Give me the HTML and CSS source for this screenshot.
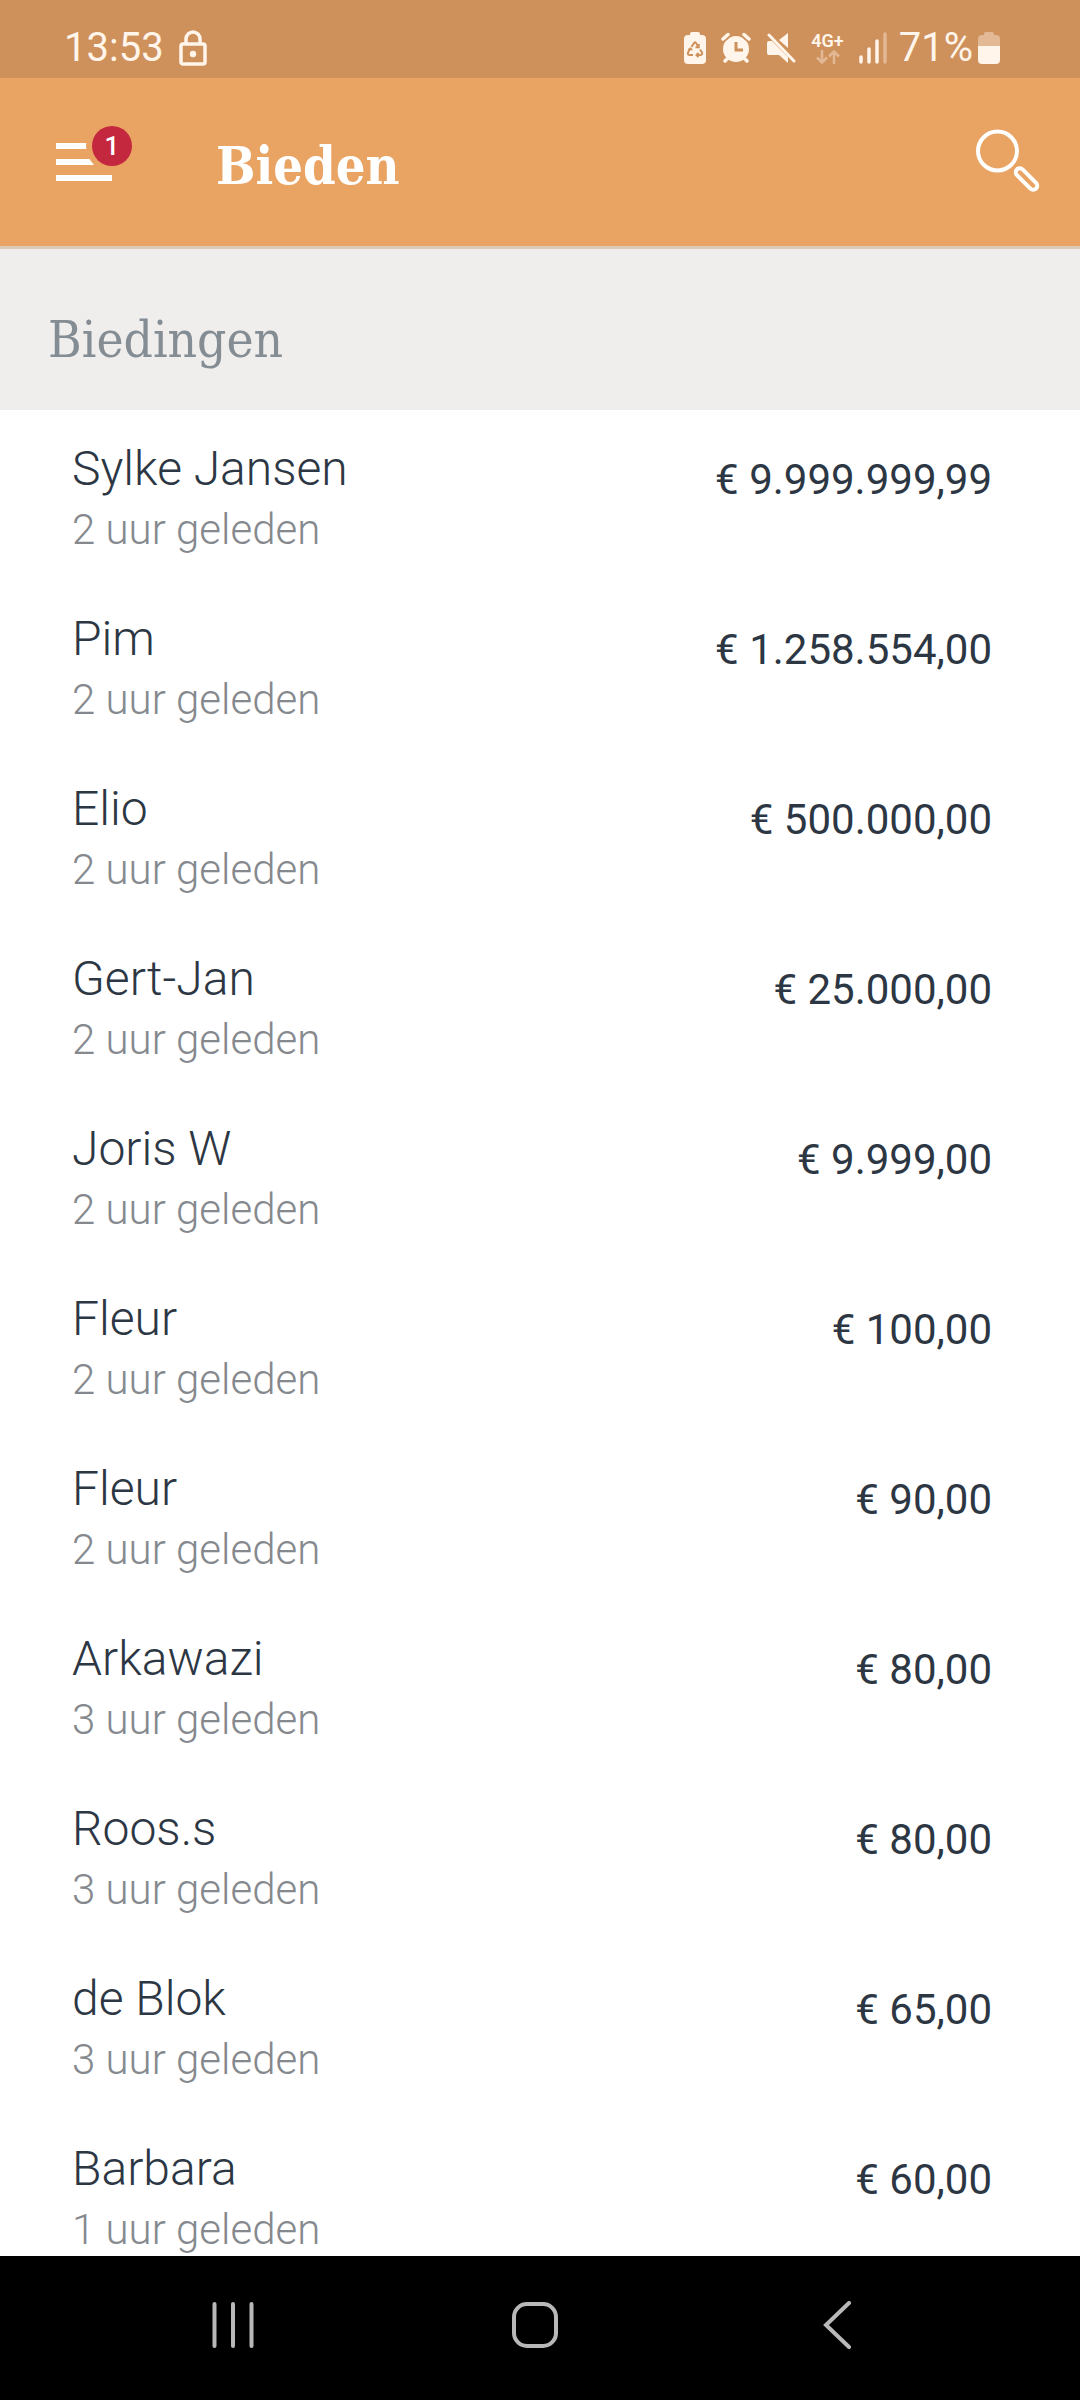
FILE: index.html
```html
<!DOCTYPE html>
<html lang="nl">
<head>
    <meta charset="UTF-8">
    <meta name="viewport" content="width=device-width, initial-scale=1.0">
    <title>Bieden</title>
    <link rel="stylesheet" href="styles.css">
</head>
<body>

    <div class="status-bar">
        <span>13:53</span>
        <svg class="lock" width="28" height="36" viewBox="0 0 28 36">
            <rect x="2" y="14" width="24" height="20" rx="2" fill="none" stroke="currentColor" stroke-width="3.5"/>
            <path d="M7 14V9a7 7 0 0 1 14 0v5" fill="none" stroke="currentColor" stroke-width="3.5"/>
            <circle cx="14" cy="24" r="3.2" fill="currentColor"/>
        </svg>

        <div class="status-icons">
            <!-- battery saver -->
            <svg width="22" height="32" viewBox="0 0 22 32">
                <path d="M6 3V2q0-2 2-2h6q2 0 2 2v1h2q4 0 4 4v21q0 4-4 4H4q-4 0-4-4V7q0-4 4-4z" fill="currentColor"/>
                <g class="recycle">
                    <path d="M7.500 15l2.500-4q1-1.500 2 0l2.500 4M16 17.500l2 3q.8 2.500-2 2.500h-3M9 23H6q-2.800 0-2-2.500l2-3.500"/>
                    <path d="M14.700 12v3.200h-3.200M14.500 21l-2 2 2 2M4.500 18l1.700-1.500 2 1.500"/>
                </g>
            </svg>
            <!-- alarm -->
            <svg width="30" height="32" viewBox="0 0 30 32">
                <circle cx="15" cy="17" r="13" fill="currentColor"/>
                <path d="M2 7l5-4.500M28 7l-5-4.500" fill="none" stroke="#cf915b" stroke-width="7"/>
                <path d="M2 7l5-4.500M28 7l-5-4.500M6 27l-2 2M24 27l2 2" fill="none" stroke="currentColor" stroke-width="3.500" stroke-linecap="round"/>
                <path class="hands" d="M15 10v8h7"/>
            </svg>
            <!-- muted -->
            <svg width="30" height="32" viewBox="0 0 30 32">
                <path d="M13 8l9-7v15zM1 11q0-2 2-2h3l16 16v6l-9-8H3q-2 0-2-2z" fill="currentColor"/>
                <path d="M3 3l25 26" stroke="currentColor" stroke-width="3" stroke-linecap="round"/>
            </svg>
            <div class="network">
                <span>4G+</span>
                <svg width="24" height="14" viewBox="0 0 24 14">
                    <path d="M6 0v12M1 7.500l5 5 5-5M18 14V2M13 6.500l5-5 5 5" fill="none" stroke="currentColor" stroke-width="2.500"/>
                </svg>
            </div>
            <!-- signal -->
            <svg width="28" height="32" viewBox="0 0 28 32">
                <path d="M2 25v5M10 17v13M18 9v21" stroke="currentColor" stroke-width="3.500" stroke-linecap="round"/>
                <path class="faded" d="M26 2v28" stroke="currentColor" stroke-width="3.500" stroke-linecap="round"/>
            </svg>
        </div>
        <span>71%</span>
        <svg class="battery" width="22" height="32" viewBox="0 0 22 32">
            <path class="faded" d="M0 14V7q0-4 4-4h2V2q0-2 2-2h6q2 0 2 2v1h2q4 0 4 4v7z" fill="currentColor"/>
            <path d="M0 14h22v14q0 4-4 4H4q-4 0-4-4z" fill="currentColor"/>
        </svg>
    </div>

    <header class="app-bar">
        <button class="menu" aria-label="Menu">
            <svg width="56" height="38" viewBox="0 0 56 38">
                <path d="M0 0h56v6H0zM0 16h56v6H0zM0 32h56v6H0z" fill="currentColor"/>
            </svg>
            <span class="badge">1</span>
        </button>
        <h1>Bieden</h1>
        <button class="search" aria-label="Zoeken">
            <svg width="66" height="66" viewBox="0 0 66 66">
                <g fill="none" stroke="currentColor" stroke-width="4">
                    <circle cx="21.500" cy="22" r="19.500"/>
                    <rect x="37" y="46" width="27" height="8" rx="4" transform="rotate(45 50.500 50)"/>
                </g>
            </svg>
        </button>
    </header>

    <h2 class="section-title">Biedingen</h2>

    <ul class="bids">
        <li>
            <div><div class="name">Sylke Jansen</div><div class="time">2 uur geleden</div></div>
            <div class="amount">€ 9.999.999,99</div>
        </li>
        <li>
            <div><div class="name">Pim</div><div class="time">2 uur geleden</div></div>
            <div class="amount">€ 1.258.554,00</div>
        </li>
        <li>
            <div><div class="name">Elio</div><div class="time">2 uur geleden</div></div>
            <div class="amount">€ 500.000,00</div>
        </li>
        <li>
            <div><div class="name">Gert-Jan</div><div class="time">2 uur geleden</div></div>
            <div class="amount">€ 25.000,00</div>
        </li>
        <li>
            <div><div class="name">Joris W</div><div class="time">2 uur geleden</div></div>
            <div class="amount">€ 9.999,00</div>
        </li>
        <li>
            <div><div class="name">Fleur</div><div class="time">2 uur geleden</div></div>
            <div class="amount">€ 100,00</div>
        </li>
        <li>
            <div><div class="name">Fleur</div><div class="time">2 uur geleden</div></div>
            <div class="amount">€ 90,00</div>
        </li>
        <li>
            <div><div class="name">Arkawazi</div><div class="time">3 uur geleden</div></div>
            <div class="amount">€ 80,00</div>
        </li>
        <li>
            <div><div class="name">Roos.s</div><div class="time">3 uur geleden</div></div>
            <div class="amount">€ 80,00</div>
        </li>
        <li>
            <div><div class="name">de Blok</div><div class="time">3 uur geleden</div></div>
            <div class="amount">€ 65,00</div>
        </li>
        <li>
            <div><div class="name">Barbara</div><div class="time">1 uur geleden</div></div>
            <div class="amount">€ 60,00</div>
        </li>
    </ul>

    <nav class="nav-bar">
        <button aria-label="Recente apps">
            <svg width="42" height="48" viewBox="0 0 42 48">
                <path d="M2.500 3v42M21 3v42M39.500 3v42" stroke="currentColor" stroke-width="4" stroke-linecap="round"/>
            </svg>
        </button>
        <button aria-label="Startscherm">
            <svg width="48" height="48" viewBox="0 0 48 48">
                <rect x="3" y="3" width="42" height="42" rx="13" fill="none" stroke="currentColor" stroke-width="4"/>
            </svg>
        </button>
        <button aria-label="Terug">
            <svg width="42" height="48" viewBox="0 0 42 48">
                <path d="M33 2L10 24l23 22" fill="none" stroke="currentColor" stroke-width="4" stroke-linecap="round"/>
            </svg>
        </button>
    </nav>

</body>
</html>
```

FILE: styles.css
```css
* {
    box-sizing: border-box;
}

body {
    margin: 0;
    height: 100vh;
    display: flex;
    flex-direction: column;
    overflow: hidden;
    background: white;
    font-family: Roboto, sans-serif;
    color: #2d3744;
}

svg {
    display: block;
    flex-shrink: 0;
}

button {
    padding: 0;
    border: none;
    background: none;
    color: inherit;
    font-family: inherit;
    cursor: pointer;
}

h1, h2 {
    margin: 0;
    font-family: "DejaVu Serif Condensed", "DejaVu Serif", serif;
}

/* Status bar */
.status-bar {
    display: flex;
    align-items: center;
    flex-shrink: 0;
    height: 78px;
    padding: 17px 80px 0 64px;
    background: #cf915b;
    color: #fff5ea;
    font-size: 40px;
    line-height: 60px;
}

.lock {
    margin-left: 15px;
}

.status-icons {
    display: flex;
    align-items: center;
    gap: 15px;
    margin-left: auto;
    margin-right: 12px;
}

.network {
    display: flex;
    flex-direction: column;
    align-items: center;
    font-size: 18px;
    font-weight: 600;
    line-height: 18px;
}

.network svg, .faded {
    opacity: 0.4;
}

.battery {
    margin-left: 5px;
}

.recycle {
    fill: none;
    stroke: #cf915b;
    stroke-width: 2;
}

.hands {
    fill: none;
    stroke: #cf915b;
    stroke-width: 3;
}

/* App bar */
.app-bar {
    display: flex;
    align-items: center;
    flex-shrink: 0;
    height: 171px;
    padding: 0 38px 0 56px;
    background: #e9a464;
    border-bottom: 3px solid #dccab9;
    color: white;
}

.menu {
    position: relative;
}

.badge {
    position: absolute;
    top: -17px;
    right: -20px;
    width: 40px;
    height: 40px;
    border-radius: 50%;
    background: #c4283e;
    box-shadow: 0 0 0 6px #e9a464;
    font-size: 26px;
    font-weight: 500;
    line-height: 40px;
}

.app-bar h1 {
    flex: 1;
    margin-left: 104px;
    padding-top: 8px;
    font-size: 52px;
    line-height: 60px;
}

/* Bids */
.section-title {
    flex-shrink: 0;
    padding: 61px 48px 40px;
    background: #f0eeec;
    color: #848c94;
    font-size: 51px;
    font-weight: normal;
    line-height: 60px;
}

.bids {
    flex: 1;
    min-height: 0;
    margin: 0;
    padding: 0;
    overflow: hidden;
    list-style: none;
}

.bids li {
    display: flex;
    justify-content: space-between;
    padding: 28px 88px 20px 72px;
}

.name {
    font-size: 48px;
    font-weight: 300;
    line-height: 62px;
}

.time {
    color: #85898e;
    font-size: 42px;
    font-weight: 300;
    line-height: 60px;
}

.amount {
    padding-top: 12px;
    font-size: 42px;
    line-height: 60px;
}

/* Navigation bar */
.nav-bar {
    display: flex;
    flex-shrink: 0;
    height: 144px;
    padding: 0 92px 6px 82px;
    background: black;
    color: #b8b8b8;
}

.nav-bar button {
    display: flex;
    flex: 1;
    align-items: center;
    justify-content: center;
}
```
